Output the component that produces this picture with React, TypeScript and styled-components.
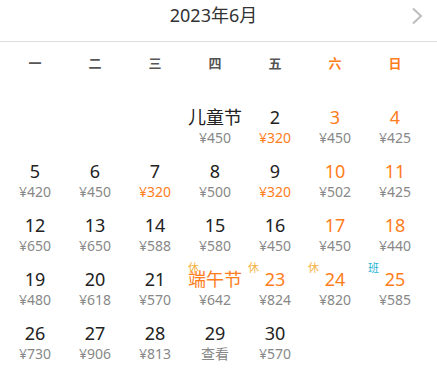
import React from 'react';
import styled, { createGlobalStyle } from 'styled-components';

const GlobalStyle = createGlobalStyle`
  html, body {
    margin: 0;
    padding: 0;
    background: #fff;
  }
  body {
    font-family: 'Noto Sans', 'Noto Sans CJK SC', sans-serif;
  }
`;

type Day = {
  label: string;
  price: string;
  weekend?: boolean;
  cheap?: boolean;
  tag?: 'rest' | 'work';
};

const weekDays = ['一', '二', '三', '四', '五', '六', '日'];

const days: (Day | null)[] = [
  null, null, null,
  { label: '儿童节', price: '¥450' },
  { label: '2', price: '¥320', cheap: true },
  { label: '3', price: '¥450', weekend: true },
  { label: '4', price: '¥425', weekend: true },
  { label: '5', price: '¥420' },
  { label: '6', price: '¥450' },
  { label: '7', price: '¥320', cheap: true },
  { label: '8', price: '¥500' },
  { label: '9', price: '¥320', cheap: true },
  { label: '10', price: '¥502', weekend: true },
  { label: '11', price: '¥425', weekend: true },
  { label: '12', price: '¥650' },
  { label: '13', price: '¥650' },
  { label: '14', price: '¥588' },
  { label: '15', price: '¥580' },
  { label: '16', price: '¥450' },
  { label: '17', price: '¥450', weekend: true },
  { label: '18', price: '¥440', weekend: true },
  { label: '19', price: '¥480' },
  { label: '20', price: '¥618' },
  { label: '21', price: '¥570' },
  { label: '端午节', price: '¥642', weekend: true, tag: 'rest' },
  { label: '23', price: '¥824', weekend: true, tag: 'rest' },
  { label: '24', price: '¥820', weekend: true, tag: 'rest' },
  { label: '25', price: '¥585', weekend: true, tag: 'work' },
  { label: '26', price: '¥730' },
  { label: '27', price: '¥906' },
  { label: '28', price: '¥813' },
  { label: '29', price: '查看' },
  { label: '30', price: '¥570' },
];

const App: React.FC = () => {
  return (
    <Page>
      <GlobalStyle />
      <Header>
        <Title>2023年6月</Title>
        <NextButton aria-label="下个月">
          <svg width="12" height="18" viewBox="0 0 12 18">
            <path d="M2 1.5 L10 9 L2 16.5" fill="none" stroke="#bdbdbd" strokeWidth="2" />
          </svg>
        </NextButton>
      </Header>
      <WeekRow>
        {weekDays.map((w, i) => (
          <WeekDay key={w} $weekend={i >= 5}>{w}</WeekDay>
        ))}
      </WeekRow>
      <Grid>
        {days.map((d, i) =>
          d ? (
            <Cell key={i}>
              {d.tag && <Tag $work={d.tag === 'work'}>{d.tag === 'work' ? '班' : '休'}</Tag>}
              <DayNum $weekend={!!d.weekend}>{d.label}</DayNum>
              <Price $cheap={!!d.cheap}>{d.price}</Price>
            </Cell>
          ) : (
            <Cell key={i} />
          )
        )}
      </Grid>
    </Page>
  );
};

export default App;

const Page = styled.div`
  width: 437px;
  height: 370px;
  overflow: hidden;
  background: #fff;
`;

const Header = styled.div`
  position: relative;
  display: flex;
  justify-content: center;
  align-items: center;
  height: 42px;
  padding-right: 10px;
  padding-bottom: 11px;
  box-sizing: border-box;
  border-bottom: 1px solid #dedede;
`;

const Title = styled.div`
  font-size: 18px;
  line-height: 30px;
  color: #333;
`;

const NextButton = styled.div`
  position: absolute;
  right: 14px;
  top: 7px;
  width: 12px;
  height: 18px;
  display: flex;
`;

const WeekRow = styled.div`
  display: grid;
  grid-template-columns: repeat(7, 60px);
  padding-left: 5px;
  height: 40px;
  align-items: center;
`;

const WeekDay = styled.div<{ $weekend: boolean }>`
  text-align: center;
  font-size: 13px;
  font-weight: bold;
  color: ${({ $weekend }) => ($weekend ? '#ff7d1a' : '#555')};
`;

const Grid = styled.div`
  display: grid;
  grid-template-columns: repeat(7, 60px);
  grid-auto-rows: 54px;
  padding-left: 5px;
  margin-top: 24px;
`;

const Cell = styled.div`
  position: relative;
  display: flex;
  flex-direction: column;
  align-items: center;
`;

const DayNum = styled.div<{ $weekend: boolean }>`
  font-size: 18px;
  line-height: 22px;
  color: ${({ $weekend }) => ($weekend ? '#ff7d1a' : '#222')};
`;

const Price = styled.div<{ $cheap: boolean }>`
  font-size: 14px;
  line-height: 20px;
  color: ${({ $cheap }) => ($cheap ? '#ff7d1a' : '#888')};
`;

const Tag = styled.span<{ $work: boolean }>`
  position: absolute;
  left: 3px;
  top: -6px;
  font-size: 11px;
  line-height: 12px;
  color: ${({ $work }) => ($work ? '#1fb3d6' : '#f5b342')};
`;
